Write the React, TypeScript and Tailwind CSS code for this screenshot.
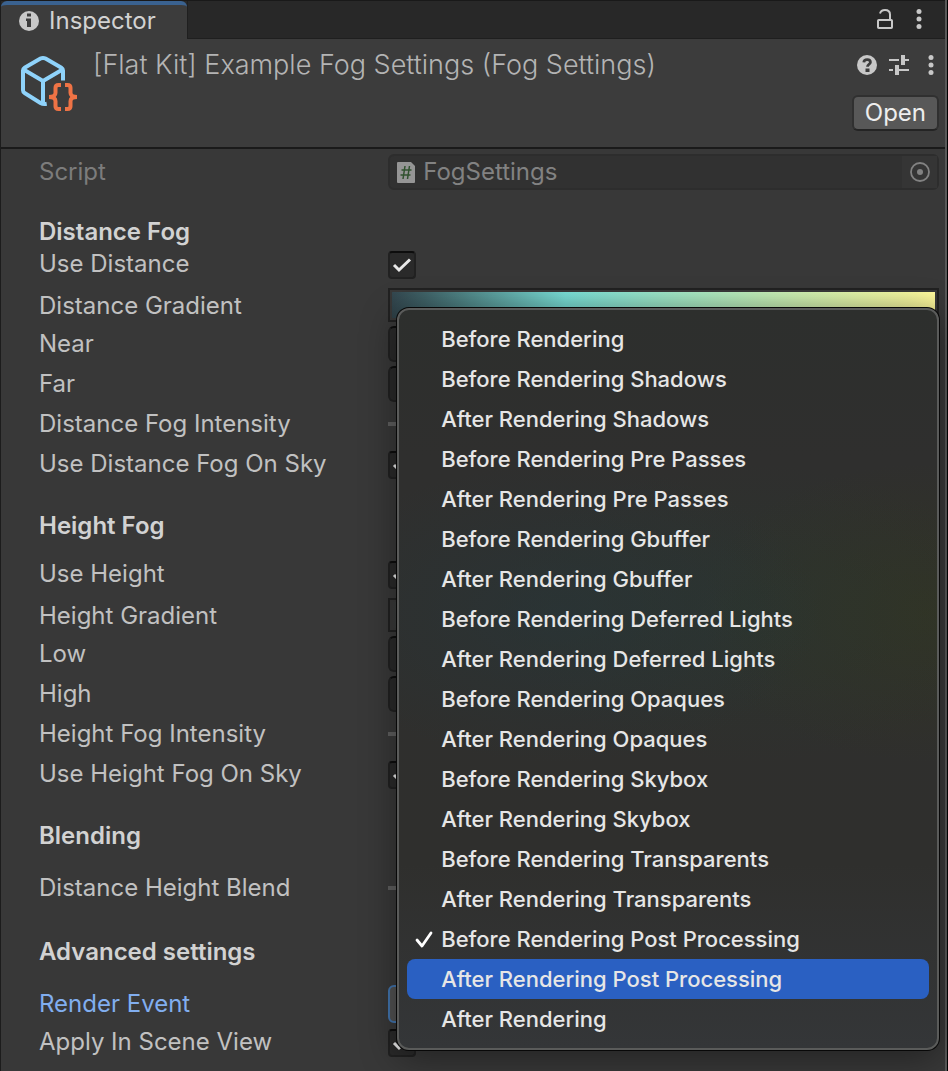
import React, { useState } from "react";

const EVENTS = [
  "Before Rendering",
  "Before Rendering Shadows",
  "After Rendering Shadows",
  "Before Rendering Pre Passes",
  "After Rendering Pre Passes",
  "Before Rendering Gbuffer",
  "After Rendering Gbuffer",
  "Before Rendering Deferred Lights",
  "After Rendering Deferred Lights",
  "Before Rendering Opaques",
  "After Rendering Opaques",
  "Before Rendering Skybox",
  "After Rendering Skybox",
  "Before Rendering Transparents",
  "After Rendering Transparents",
  "Before Rendering Post Processing",
  "After Rendering Post Processing",
  "After Rendering",
];

function InfoIcon() {
  return (
    <svg viewBox="0 0 20 20" className="size-5" aria-hidden="true">
      <circle cx="10" cy="10" r="10" fill="#c8c8c8" />
      <rect x="8" y="2.500" width="4" height="3" fill="#3c3c3c" />
      <path d="M7 7.500h5v8.500H8v-6H7z" fill="#3c3c3c" />
    </svg>
  );
}

function HelpIcon() {
  return (
    <svg viewBox="0 0 20 20" className="size-5" aria-hidden="true">
      <circle cx="10" cy="10" r="10" fill="#c8c8c8" />
      <path d="M6.8 7.4C7 5.4 8.400 4.700 10.200 4.700c1.900 0 3.200 1 3.200 2.500 0 2-2.900 2.200-2.900 4.600" fill="none" stroke="#3c3c3c" strokeWidth="2.800" />
      <rect x="8.500" y="13.500" width="4" height="3.500" fill="#3c3c3c" />
    </svg>
  );
}

function DotsIcon() {
  return (
    <svg viewBox="0 0 6 20" className="h-5 w-1.5" fill="#c8c8c8" aria-hidden="true">
      <circle cx="3" cy="2.500" r="2.500" />
      <circle cx="3" cy="10" r="2.500" />
      <circle cx="3" cy="17.500" r="2.500" />
    </svg>
  );
}

function LockIcon() {
  return (
    <svg viewBox="0 0 16 20" className="h-5 w-4" fill="none" stroke="#c8c8c8" strokeWidth="2" aria-hidden="true">
      <rect x="1" y="11" width="14" height="8" rx="0.800" />
      <path d="M3 4.500C3.600 2.200 5.200 1 8 1c3.500 0 5 2 5 4.500v5" />
    </svg>
  );
}

function PresetIcon() {
  return (
    <svg viewBox="0 0 20 20" className="size-5" fill="#c8c8c8" aria-hidden="true">
      <path d="M0 4h10v2H0zM16 4h4v2h-4zM12 0h4v10h-4zM0 14h4v2H0zM10 14h10v2H10zM6 10h4v10H6z" />
    </svg>
  );
}

function AssetIcon() {
  return (
    <svg viewBox="0 0 60 64" className="h-16 w-[60px] shrink-0" fill="none" aria-hidden="true">
      <g stroke="#8fd3fb" strokeWidth="4" strokeLinejoin="round">
        <path d="M44 31.500V21.500c0-1.200-.6-2.100-1.600-2.700L26.500 9.600c-1.600-.9-3.400-.9-5 0L5.600 18.800C4.600 19.400 4 20.300 4 21.500v19.800c0 1.200.6 2.100 1.600 2.700l15.900 10c1.600.9 3.500 1.200 6.200.7" />
        <path d="M4.500 20.500L24 32l19.500-11.500M24 32v22.500" />
      </g>
      <g stroke="#ef7345" strokeWidth="4">
        <path d="M42 36h-2.500c-2 0-3 1-3 2.800v5c0 2.700-1.500 4.200-6.500 4.200 5 0 6.500 1.500 6.500 4.200v5c0 1.800 1 2.800 3 2.800H42" />
        <path d="M46 36h2.500c2 0 3 1 3 2.800v5c0 2.700 1.500 4.200 6.500 4.200-5 0-6.500 1.500-6.500 4.200v5c0 1.800-1 2.800-3 2.800H46" />
      </g>
    </svg>
  );
}

function ScriptIcon() {
  return (
    <svg viewBox="0 0 18 21" className="h-[21px] w-[18px] shrink-0" aria-hidden="true">
      <path d="M1 0h13l4 4v16a1 1 0 0 1-1 1H1a1 1 0 0 1-1-1V1a1 1 0 0 1 1-1z" fill="#959595" />
      <path d="M8 4L6 17M12.500 4l-2 13M4.500 8h10M3.500 13h10" stroke="#31522f" strokeWidth="1.500" />
    </svg>
  );
}

function Row({ label, id, size = "h-10", tone = "text-[#c1c1c1]", children }: {
  label: string; id: string; size?: string; tone?: string; children: React.ReactNode;
}) {
  return (
    <div className={`grid grid-cols-[38.8%_1fr] items-center ${size}`}>
      <label htmlFor={id} className={`whitespace-nowrap ${tone}`}>{label}</label>
      {children}
    </div>
  );
}

function Heading({ children }: { children: React.ReactNode }) {
  return <h2 className="h-8 leading-8 font-semibold text-[#d2d2d2]">{children}</h2>;
}

function Check({ id }: { id: string }) {
  return (
    <span className="relative mt-0.5 size-7">
      <input id={id} type="checkbox" defaultChecked className="peer block size-7 appearance-none rounded border-2 border-[#212121] border-t-[#0d0d0d] bg-[#2a2a2a]" />
      <svg viewBox="0 0 28 28" className="pointer-events-none absolute inset-0 hidden size-7 peer-checked:block" fill="none" stroke="#e8e8e8" strokeWidth="3" aria-hidden="true">
        <path d="M6 14l5 5L22 8.500" />
      </svg>
    </span>
  );
}

function NumberField({ id, value }: { id: string; value: string }) {
  return <input id={id} type="text" defaultValue={value} className="h-9 w-full rounded-md border-2 border-[#212121] border-t-[#0d0d0d] bg-[#2a2a2a] px-1.5 text-[#d2d2d2]" />;
}

function Slider({ id }: { id: string }) {
  return <input id={id} type="range" className="h-1 w-full appearance-none bg-[#5e5e5e]" />;
}

function GradientField({ id, fill }: { id: string; fill: string }) {
  return (
    <button id={id} type="button" className="h-[34px] w-full self-start border-2 border-[#212121] p-0.5">
      <span className={`block size-full ${fill}`} />
    </button>
  );
}

function EventMenu({ selected, onSelect }: { selected: number; onSelect: (i: number) => void }) {
  return (
    <div
      role="menu"
      aria-label="Render Event"
      className="absolute right-0 -bottom-[26px] left-[9px] z-10 rounded-xl border-2 border-[#5a5b5a] bg-[#2f2f2e] bg-[radial-gradient(ellipse_260px_150px_at_30%_41%,#27363999,transparent),radial-gradient(ellipse_260px_150px_at_65%_41%,#29382f77,transparent),radial-gradient(ellipse_230px_150px_at_98%_41%,#33361f99,transparent),linear-gradient(#2d2f2d,#2f2f2e_20%,#2f2f2d_75%,#343638)] px-2 py-[9px] text-[22px] font-medium text-[#e6e6e6] shadow-[0_0_0_1px_#080808,0_8px_36px_#00000066]"
    >
      {EVENTS.map((name, i) => (
        <button
          key={name}
          type="button"
          role="menuitemradio"
          aria-checked={i === selected}
          onClick={() => onSelect(i)}
          className={`flex h-10 w-full items-center rounded-lg text-left whitespace-nowrap ${i === 16 ? "bg-[#2a60c2]" : ""}`}
        >
          <span className="flex w-[34px] shrink-0 pl-2">
            {i === selected && (
              <svg viewBox="0 0 18 18" className="size-[18px]" fill="none" stroke="#ffffff" strokeWidth="2.800" strokeLinecap="round" strokeLinejoin="round" aria-hidden="true">
                <path d="M2 10l5 6L16 3" />
              </svg>
            )}
          </span>
          {name}
        </button>
      ))}
    </div>
  );
}

export default function App() {
  const [selected, setSelected] = useState(15);
  return (
    <div className="min-h-screen overflow-hidden border-r border-l border-r-black border-l-[#1c1c1c] bg-[#383838] font-['Inter','Liberation_Sans',sans-serif] text-[24px] leading-8 text-[#c1c1c1]">
      <div className="min-h-screen border-r-2 border-[#585858]">
        <header className="flex h-[39px] items-stretch justify-between border-t border-[#191919] bg-[#282828]">
          <button type="button" className="flex w-[186px] items-center gap-2.5 rounded-t-md border-t-4 border-[#3a6290] bg-[#3c3c3c] pb-0.5 pl-[18px] text-[#d2d2d2]">
            <InfoIcon />
            Inspector
          </button>
          <div className="flex flex-1 items-center justify-end gap-[23px] border-b border-l border-[#1f1f1f] pr-[23px] pb-0.5">
            <button type="button" aria-label="Lock"><LockIcon /></button>
            <button type="button" aria-label="Tab options"><DotsIcon /></button>
          </div>
        </header>

        <section className="flex h-[110px] items-start border-b-2 border-[#1a1a1a] bg-[#3c3c3c] pt-2.5 pr-1.5 pl-[18px]">
          <AssetIcon />
          <h1 className="ml-3.5 flex-1 text-[27px] font-light whitespace-nowrap text-[#b4b4b4]">[Flat Kit] Example Fog Settings (Fog Settings)</h1>
          <div className="flex flex-col items-end gap-3.5">
            <div className="flex h-8 items-center gap-3 pr-[5px]">
              <button type="button" aria-label="Help"><HelpIcon /></button>
              <button type="button" aria-label="Presets"><PresetIcon /></button>
              <button type="button" aria-label="More" className="ml-[7px]"><DotsIcon /></button>
            </div>
            <button type="button" className="flex h-9 items-center rounded-md border-2 border-[#303030] border-b-[#242424] bg-[#585858] px-[11px] text-[#eeeeee]">Open</button>
          </div>
        </section>

        <main className="pt-[3px] pr-1.5 pb-2.5 pl-[38px]">
          <Row label="Script" id="script" tone="text-[#7c7c7c]">
            <div className="flex h-9 items-center rounded-md border-2 border-[#2d2d2d] bg-[#313131] pl-[7px]">
              <ScriptIcon />
              <input id="script" type="text" readOnly value="FogSettings" className="ml-2 w-full min-w-0 bg-transparent text-[#828282] outline-none" />
              <button type="button" aria-label="Select script" className="flex h-full w-[35px] shrink-0 items-center justify-center bg-[#353535]">
                <svg viewBox="0 0 20 20" className="size-5" aria-hidden="true">
                  <circle cx="10" cy="10" r="9" fill="none" stroke="#828282" strokeWidth="1.800" />
                  <circle cx="10" cy="10" r="3" fill="#828282" />
                </svg>
              </button>
            </div>
          </Row>

          <section className="mt-6">
            <Heading>Distance Fog</Heading>
            <Row label="Use Distance" id="use-distance" size="h-8"><Check id="use-distance" /></Row>
            <Row label="Distance Gradient" id="distance-gradient" size="mt-2 h-9">
              <GradientField id="distance-gradient" fill="bg-[linear-gradient(#00000000,#00000020),linear-gradient(90deg,#33474f,#79ded6_32%,#fff99b)]" />
            </Row>
            <Row label="Near" id="near"><NumberField id="near" value="0" /></Row>
            <Row label="Far" id="far"><NumberField id="far" value="100" /></Row>
            <Row label="Distance Fog Intensity" id="distance-intensity"><Slider id="distance-intensity" /></Row>
            <Row label="Use Distance Fog On Sky" id="distance-sky"><Check id="distance-sky" /></Row>
          </section>

          <section className="mt-[26px]">
            <Heading>Height Fog</Heading>
            <Row label="Use Height" id="use-height" size="mt-4 h-8"><Check id="use-height" /></Row>
            <Row label="Height Gradient" id="height-gradient" size="mt-2 h-9">
              <GradientField id="height-gradient" fill="bg-[linear-gradient(90deg,#383838,#79ded6_32%,#8aa040)]" />
            </Row>
            <Row label="Low" id="low"><NumberField id="low" value="0" /></Row>
            <Row label="High" id="high"><NumberField id="high" value="0" /></Row>
            <Row label="Height Fog Intensity" id="height-intensity"><Slider id="height-intensity" /></Row>
            <Row label="Use Height Fog On Sky" id="height-sky"><Check id="height-sky" /></Row>
          </section>

          <section className="mt-[26px]">
            <Heading>Blending</Heading>
            <Row label="Distance Height Blend" id="blend" size="mt-4 h-10"><Slider id="blend" /></Row>
          </section>

          <section className="mt-7">
            <Heading>Advanced settings</Heading>
            <Row label="Render Event" id="render-event" size="mt-4 h-10" tone="text-[#81aeef]">
              <div className="relative flex h-full items-center">
                <button id="render-event" type="button" aria-haspopup="menu" aria-expanded="true" className="h-[38px] w-full rounded-md border-2 border-[#4274ad] bg-[#515151]" />
                <EventMenu selected={selected} onSelect={setSelected} />
              </div>
            </Row>
            <Row label="Apply In Scene View" id="scene-view" size="h-9"><Check id="scene-view" /></Row>
          </section>
        </main>
      </div>
    </div>
  );
}
